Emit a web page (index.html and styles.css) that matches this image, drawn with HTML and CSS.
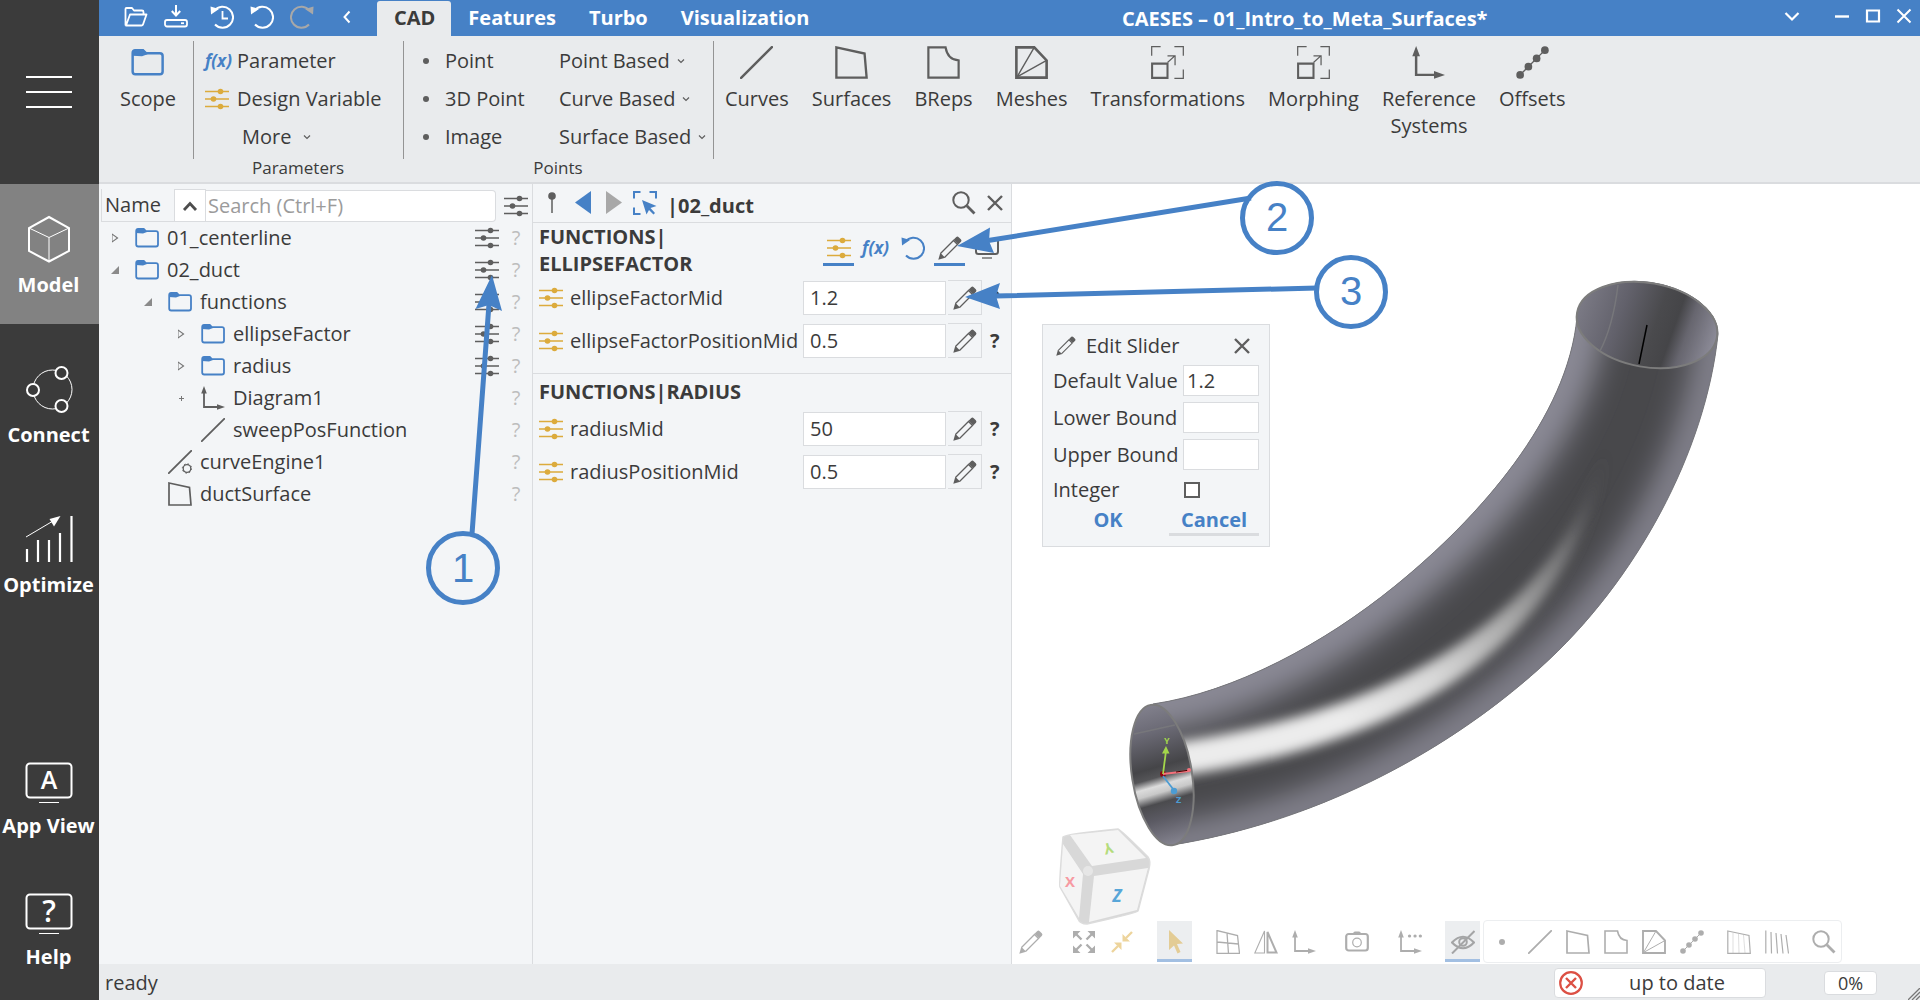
FILE: index.html
```html
<!DOCTYPE html>
<html lang="en">
<head>
<meta charset="utf-8">
<title>CAESES – 01_Intro_to_Meta_Surfaces*</title>
<link rel="stylesheet" href="styles.css">
</head>
<body>
<svg class="sprite" aria-hidden="true">
  <defs>
    <symbol id="folder" viewBox="0 0 24 24"><path d="M1.200 6.500V5q0-2 2-2h5.500l2.200 2.200H21q2 0 2 2V18.500q0 2-2 2H3.200q-2 0-2-2Z" fill="none" stroke="currentColor" stroke-width="1.800"/><path d="M1 7V5Q1 2.500 3.200 2.500H9L12 6 8 7.500Z" fill="currentColor"/></symbol>
    <symbol id="sliders" viewBox="0 0 24 24"><path d="M0 4.500H24M0 12H24M0 19.500H24" stroke="currentColor" stroke-width="1.300"/><g fill="currentColor"><circle cx="15.500" cy="4.500" r="2.800"/><circle cx="8.500" cy="12" r="2.800"/><circle cx="15.500" cy="19.500" r="2.800"/></g></symbol>
    <symbol id="pencil" viewBox="0 0 24 24"><path d="M2.500 17.500 15.500 4.500 19.500 8.500 6.500 21.500" fill="none" stroke="currentColor" stroke-width="1.300"/><path d="M.3 23.700 2.300 16.800 7.200 21.700ZM15.500 3.800 18.300 1Q19.500 0 20.700 1.200L22.800 3.300Q24 4.500 23 5.700L20.200 8.500Z" fill="currentColor"/></symbol>
    <symbol id="line" viewBox="0 0 24 24"><path d="M.8 23.200 23.200.8" stroke="currentColor" stroke-width="1.800" stroke-linecap="round"/></symbol>
    <symbol id="surface" viewBox="0 0 24 24"><path d="M1 1 21.500 5.500 23 23H1Z" fill="none" stroke="currentColor" stroke-width="1.700"/></symbol>
    <symbol id="brep" viewBox="0 0 24 24"><path d="M1 1H13.500Q15 10 23 10.500V23H1Z" fill="none" stroke="currentColor" stroke-width="1.600"/></symbol>
    <symbol id="mesh" viewBox="0 0 24 24"><path d="M1 1H14L23 10.500V23H1Z" fill="none" stroke="currentColor" stroke-width="1.900"/><path d="M1.500 22.500 14 1M1.500 22.500 23 10.500" stroke="currentColor"/></symbol>
    <symbol id="scale" viewBox="0 0 24 24"><path d="M.5 7V.5H7M17 .5h6.500V7M23.500 17v6.500H17M12 12 17.500 7M12 7.200h5.500V14" fill="none" stroke="currentColor" stroke-width=".9"/><path d="M.8 12.800H12V23.200H.8Z" fill="none" stroke="currentColor" stroke-width="1.500"/></symbol>
    <symbol id="axes" viewBox="0 0 24 24"><path d="M3 6V21H17" fill="none" stroke="currentColor" stroke-width="1.800"/><path d="M3 0 5.800 7.500H.2ZM24 21 16 18.200V23.800Z" fill="currentColor"/></symbol>
    <symbol id="axesdots" viewBox="0 0 24 24"><path d="M3 6V21H17" fill="none" stroke="currentColor" stroke-width="1.800"/><path d="M3 0 5.800 7.500H.2ZM24 21 16 18.200V23.800Z" fill="currentColor"/><path d="M11.500 6h.1M17 6h.1M22.300 6h.1" stroke="currentColor" stroke-width="3.200" stroke-linecap="round"/></symbol>
    <symbol id="offsets" viewBox="0 0 24 24"><path d="M3 21 21 3" stroke="currentColor"/><g fill="currentColor"><circle cx="3" cy="21" r="2.800"/><circle cx="9" cy="15" r="2.800"/><circle cx="15" cy="9" r="2.800"/><circle cx="21" cy="3" r="2.800"/></g></symbol>
    <symbol id="engine" viewBox="0 0 24 24"><path d="M.8 23.200 23.200.8" stroke="currentColor" stroke-width="1.800" stroke-linecap="round"/><circle cx="19" cy="18.500" r="3.800" fill="none" stroke="currentColor" stroke-width="1.300"/><circle cx="19" cy="18.500" r="4.700" fill="none" stroke="currentColor" stroke-dasharray="1.500 2.190"/></symbol>
    <symbol id="undo" viewBox="0 0 24 24"><path d="M4.500 5.500A10.500 10.500 0 1 1 5 19.500" fill="none" stroke="currentColor" stroke-width="2"/><path d="M.5 1.500 9 4 1 9.500Z" fill="currentColor"/></symbol>
    <symbol id="search" viewBox="0 0 24 24"><circle cx="9" cy="9" r="7.700" fill="none" stroke="currentColor" stroke-width="2"/><path d="M14.800 14.800 22.500 22.500" stroke="currentColor" stroke-width="2.800"/></symbol>
    <symbol id="close" viewBox="0 0 24 24"><path d="M5 5 19 19M19 5 5 19" stroke="currentColor" stroke-width="2.400"/></symbol>
    <symbol id="dot" viewBox="0 0 24 24"><circle cx="12" cy="12" r="3" fill="currentColor"/></symbol>
    <symbol id="chev" viewBox="0 0 8 8"><path d="M1 2.500 4 5.500 7 2.500" fill="none" stroke="currentColor" stroke-width="1.200"/></symbol>
  </defs>
</svg>

<div class="app">
  <nav class="side" aria-label="Workspaces">
    <button class="burger" aria-label="Menu"><svg width="48" height="34" viewBox="0 0 48 34"><path d="M1 2H47M1 17H47M1 32H47" stroke="currentColor" stroke-width="2"/></svg></button>
    <div class="side-main">
      <button class="side-item active"><svg viewBox="0 0 48 48"><path d="M24 2 44 13V36L24 46.500 4 36V13Z" fill="none" stroke="currentColor" stroke-width="2"/><path d="M4 13 24 22.500 44 13M24 22.500V46" fill="none" stroke="currentColor" stroke-width="1"/></svg>Model</button>
      <button class="side-item"><svg viewBox="0 0 48 48"><circle cx="27.500" cy="24.500" r="19.500" fill="none" stroke="currentColor" stroke-width="1"/><g class="node" stroke="currentColor" stroke-width="2"><circle cx="8" cy="25" r="6"/><circle cx="36.500" cy="8" r="6"/><circle cx="36.500" cy="41" r="6"/></g></svg>Connect</button>
      <button class="side-item"><svg viewBox="0 0 48 48"><path d="M2 34V47M13 25V47M24 25V47M35 18V47M46.500 1V47" stroke="currentColor" stroke-width="2.200"/><path d="M1 22 28 6" stroke="currentColor"/><path d="M35.500 1 29 11.500 24.500 4Z" fill="currentColor"/></svg>Optimize</button>
    </div>
    <div class="side-foot">
      <button class="side-item"><svg viewBox="0 0 48 48"><rect x="1.500" y="7.500" width="45" height="34" rx="3.500" fill="none" stroke="currentColor" stroke-width="2"/><path d="M14 46.500H34" stroke="currentColor"/><text x="24" y="33" text-anchor="middle">A</text></svg>App View</button>
      <button class="side-item"><svg viewBox="0 0 48 48"><rect x="1.500" y="7.500" width="45" height="34" rx="3.500" fill="none" stroke="currentColor" stroke-width="2"/><path d="M14 46.500H34" stroke="currentColor"/><text class="big" x="24" y="35" text-anchor="middle">?</text></svg>Help</button>
    </div>
  </nav>

  <div class="main">
    <header class="titlebar">
      <div class="quick">
        <button aria-label="Open"><svg class="ic" viewBox="0 0 24 24"><path d="M1.500 20.500V4Q1.500 3 2.500 3H8l2 2.500h8Q19.500 5.500 19.500 7V9M2 20.500 6 9.500H22.500L19 19.500Q18.500 20.500 17.500 20.500Z" fill="none" stroke="currentColor" stroke-width="1.800" stroke-linejoin="round"/></svg></button>
        <button aria-label="Save"><svg class="ic" viewBox="0 0 24 24"><path d="M12 0V9M7.800 6 12 10.500 16.200 6" fill="none" stroke="currentColor" stroke-width="2"/><rect x="1" y="15" width="22" height="6.500" rx="2" fill="none" stroke="currentColor" stroke-width="1.800"/><path d="M17 18.200h3" stroke="currentColor" stroke-width="1.800"/></svg></button>
        <button aria-label="History" class="q-gap"><svg class="ic" viewBox="0 0 24 24"><use href="#undo"/><path d="M12.500 6V13.500H18" fill="none" stroke="currentColor" stroke-width="1.800"/></svg></button>
        <button aria-label="Undo"><svg class="ic"><use href="#undo"/></svg></button>
        <button aria-label="Redo" class="off"><svg class="ic" viewBox="0 0 24 24"><path d="M19.500 5.500A10.500 10.500 0 1 0 19 19.500" fill="none" stroke="currentColor" stroke-width="2"/><path d="M23.500 1.500 15 4 23 9.500Z" fill="currentColor"/></svg></button>
        <button aria-label="Collapse" class="fold"><svg class="ic" viewBox="0 0 24 24"><path d="M14.500 6.500 9.500 12 14.500 17.500" fill="none" stroke="currentColor" stroke-width="2"/></svg></button>
      </div>
      <div class="tabs" role="tablist">
        <button role="tab" aria-selected="true" class="tab on">CAD</button><button role="tab" class="tab">Features</button><button role="tab" class="tab">Turbo</button><button role="tab" class="tab">Visualization</button>
      </div>
      <h1>CAESES – 01_Intro_to_Meta_Surfaces*</h1>
      <div class="win">
        <button aria-label="Options" class="w-opt"><svg viewBox="0 0 16 16"><path d="M1.500 5 8 11.500 14.500 5" fill="none" stroke="currentColor" stroke-width="2.200"/></svg></button>
        <button aria-label="Minimize"><svg viewBox="0 0 16 16"><path d="M1 8.500H15" stroke="currentColor" stroke-width="2.400"/></svg></button>
        <button aria-label="Maximize"><svg viewBox="0 0 16 16"><path d="M2 2.500H14V13.500H2Z" fill="none" stroke="currentColor" stroke-width="2.200"/></svg></button>
        <button aria-label="Close"><svg viewBox="0 0 16 16"><path d="M1.500 1.500 14.500 14.500M14.500 1.500 1.500 14.500" stroke="currentColor" stroke-width="2"/></svg></button>
      </div>
    </header>

    <div class="ribbon">
      <div class="group scope"><button class="tool"><svg class="blue"><use href="#folder"/></svg>Scope</button></div>
      <div class="group params">
        <button class="cmd"><span class="fx">f(x)</span>Parameter</button>
        <button class="cmd"><svg class="ic gold"><use href="#sliders"/></svg>Design Variable</button>
        <button class="cmd more">More<svg class="chev"><use href="#chev"/></svg></button>
        <div class="caption">Parameters</div>
      </div>
      <div class="group points">
        <button class="cmd"><svg class="ic"><use href="#dot"/></svg>Point</button><button class="cmd drop">Point Based<svg class="chev"><use href="#chev"/></svg></button>
        <button class="cmd"><svg class="ic"><use href="#dot"/></svg>3D Point</button><button class="cmd drop">Curve Based<svg class="chev"><use href="#chev"/></svg></button>
        <button class="cmd"><svg class="ic"><use href="#dot"/></svg>Image</button><button class="cmd drop">Surface Based<svg class="chev"><use href="#chev"/></svg></button>
        <div class="caption">Points</div>
      </div>
      <div class="group tools">
        <button class="tool"><svg><use href="#line"/></svg>Curves</button>
        <button class="tool"><svg><use href="#surface"/></svg>Surfaces</button>
        <button class="tool"><svg><use href="#brep"/></svg>BReps</button>
        <button class="tool"><svg><use href="#mesh"/></svg>Meshes</button>
        <button class="tool"><svg><use href="#scale"/></svg>Transformations</button>
        <button class="tool"><svg><use href="#scale"/></svg>Morphing</button>
        <button class="tool"><svg><use href="#axes"/></svg>Reference<br>Systems</button>
        <button class="tool"><svg><use href="#offsets"/></svg>Offsets</button>
      </div>
    </div>

    <div class="work">
      <section class="tree" aria-label="Objects">
        <div class="tree-head">
          <label class="name" for="find">Name</label>
          <button class="up" aria-label="Collapse all"><svg width="16" height="16" viewBox="0 0 16 16"><path d="M2 12 8 5.500 14 12" fill="none" stroke="currentColor" stroke-width="2.800"/></svg></button>
          <input id="find" type="text" placeholder="Search (Ctrl+F)">
          <button class="filter" aria-label="Filter"><svg class="ic"><use href="#sliders"/></svg></button>
        </div>
        <ul>
          <li class="l0"><i class="tw shut"></i><svg class="ic blue"><use href="#folder"/></svg><span>01_centerline</span><svg class="ic"><use href="#sliders"/></svg><b>?</b></li>
          <li class="l0"><i class="tw open"></i><svg class="ic blue"><use href="#folder"/></svg><span>02_duct</span><svg class="ic"><use href="#sliders"/></svg><b>?</b></li>
          <li class="l1"><i class="tw open"></i><svg class="ic blue"><use href="#folder"/></svg><span>functions</span><svg class="ic"><use href="#sliders"/></svg><b>?</b></li>
          <li class="l2"><i class="tw shut"></i><svg class="ic blue"><use href="#folder"/></svg><span>ellipseFactor</span><svg class="ic"><use href="#sliders"/></svg><b>?</b></li>
          <li class="l2"><i class="tw shut"></i><svg class="ic blue"><use href="#folder"/></svg><span>radius</span><svg class="ic"><use href="#sliders"/></svg><b>?</b></li>
          <li class="l2"><i class="tw leaf"></i><svg class="ic"><use href="#axes"/></svg><span>Diagram1</span><b>?</b></li>
          <li class="l2"><i class="tw"></i><svg class="ic"><use href="#line"/></svg><span>sweepPosFunction</span><b>?</b></li>
          <li class="l1"><i class="tw"></i><svg class="ic"><use href="#engine"/></svg><span>curveEngine1</span><b>?</b></li>
          <li class="l1"><i class="tw"></i><svg class="ic"><use href="#surface"/></svg><span>ductSurface</span><b>?</b></li>
        </ul>
      </section>

      <section class="props" aria-label="Object editor">
        <div class="props-head">
          <button aria-label="Pin"><svg class="ic" viewBox="0 0 24 24"><circle cx="12" cy="5" r="3.800" fill="currentColor"/><path d="M12 6V22" stroke="currentColor" stroke-width="1.500"/></svg></button>
          <button aria-label="Back" class="blue"><svg class="ic" viewBox="0 0 24 24"><path d="M20 0V23L4 11.500Z" fill="currentColor"/></svg></button>
          <button aria-label="Forward" class="dim"><svg class="ic" viewBox="0 0 24 24"><path d="M4 0V23L20 11.500Z" fill="currentColor"/></svg></button>
          <button aria-label="Select" class="blue"><svg class="ic" viewBox="0 0 24 24"><path d="M1 7.500V1H7.500M16.500 1H23V7.500M1 16.500V23H7.500" fill="none" stroke="currentColor" stroke-width="2"/><path d="M9 9 23.500 15 17.500 17 22 22 20.500 23.500 16 19 13.500 23.500Z" fill="currentColor"/></svg></button>
          <h2>|02_duct</h2>
          <button aria-label="Search"><svg class="ic"><use href="#search"/></svg></button>
          <button aria-label="Close"><svg class="ic"><use href="#close"/></svg></button>
        </div>
        <div class="sect">
          <div class="sect-head">
            <h3>FUNCTIONS|<br>ELLIPSEFACTOR</h3>
            <div class="acts">
              <button class="on gold" aria-label="Design variables"><svg class="ic"><use href="#sliders"/></svg></button>
              <button aria-label="Expression"><span class="fx">f(x)</span></button>
              <button class="blue" aria-label="Reset"><svg class="ic"><use href="#undo"/></svg></button>
              <button class="on" aria-label="Edit"><svg class="ic"><use href="#pencil"/></svg></button>
              <button aria-label="Display"><svg class="ic" viewBox="0 0 24 24"><rect x="1" y="3" width="22" height="15" rx="2.500" fill="none" stroke="currentColor" stroke-width="2"/><path d="M7 22H17" stroke="currentColor" stroke-width="1.300"/></svg></button>
            </div>
          </div>
          <div class="field"><svg class="ic gold"><use href="#sliders"/></svg><label for="f1">ellipseFactorMid</label><input id="f1" type="text" value="1.2"><button class="edit" aria-label="Edit"><svg class="ic"><use href="#pencil"/></svg></button><b>?</b></div>
          <div class="field"><svg class="ic gold"><use href="#sliders"/></svg><label for="f2">ellipseFactorPositionMid</label><input id="f2" type="text" value="0.5"><button class="edit" aria-label="Edit"><svg class="ic"><use href="#pencil"/></svg></button><b>?</b></div>
        </div>
        <div class="sect">
          <h3>FUNCTIONS|RADIUS</h3>
          <div class="field"><svg class="ic gold"><use href="#sliders"/></svg><label for="f3">radiusMid</label><input id="f3" type="text" value="50"><button class="edit" aria-label="Edit"><svg class="ic"><use href="#pencil"/></svg></button><b>?</b></div>
          <div class="field"><svg class="ic gold"><use href="#sliders"/></svg><label for="f4">radiusPositionMid</label><input id="f4" type="text" value="0.5"><button class="edit" aria-label="Edit"><svg class="ic"><use href="#pencil"/></svg></button><b>?</b></div>
        </div>
      </section>

      <section class="view" aria-label="3D view">
        <svg class="scene" width="908" height="780" viewBox="1012 183 908 780">
          <defs>
            <clipPath id="body"><path id="duct" d="M1153 703C1235 691 1325 642 1395 585C1480 516 1568 416 1577 316A71 43 10 0 1 1718 333C1706 450 1636 581 1540 667C1441 756 1310 822 1172 844Z"/></clipPath>
            <clipPath id="mouth"><ellipse cx="1162" cy="774" rx="30" ry="71" transform="rotate(-9 1162 774)"/></clipPath>
            <filter id="soft" filterUnits="userSpaceOnUse" x="1000" y="180" width="920" height="800"><feGaussianBlur stdDeviation="15"/></filter>
            <filter id="glow" filterUnits="userSpaceOnUse" x="1000" y="180" width="920" height="800"><feGaussianBlur stdDeviation="6"/></filter>
            <linearGradient id="shine" gradientUnits="userSpaceOnUse" x1="1340" y1="720" x2="1610" y2="450"><stop offset="0" stop-color="#ececec"/><stop offset=".25" stop-color="#d8d8d8"/><stop offset=".5" stop-color="#a8a8a8"/><stop offset=".75" stop-color="#707072"/><stop offset="1" stop-color="#4a4a4d" stop-opacity="0"/></linearGradient>
            <linearGradient id="inA" gradientUnits="userSpaceOnUse" x1="1148" y1="704" x2="1180" y2="842"><stop offset="0" stop-color="#82818d"/><stop offset=".2" stop-color="#6a6974"/><stop offset=".44" stop-color="#454548"/><stop offset=".51" stop-color="#555558"/><stop offset=".57" stop-color="#dcdcdc"/><stop offset=".62" stop-color="#c8c8c8"/><stop offset=".69" stop-color="#4b4b4e"/><stop offset=".8" stop-color="#5b5a63"/><stop offset="1" stop-color="#858490"/></linearGradient>
            <linearGradient id="inB" gradientUnits="userSpaceOnUse" x1="1577" y1="312" x2="1718" y2="336"><stop offset="0" stop-color="#7b7a85"/><stop offset=".3" stop-color="#62616b"/><stop offset=".55" stop-color="#4a4a4d"/><stop offset=".68" stop-color="#454548"/><stop offset=".78" stop-color="#67666f"/><stop offset="1" stop-color="#8f8e9b"/></linearGradient>
          </defs>
          <g clip-path="url(#body)">
            <rect x="1120" y="270" width="610" height="590" fill="#48484b"/>
            <g fill="none" filter="url(#soft)">
              <path stroke="#8b8a96" stroke-width="58" d="M1110 709L1153 703C1235 691 1325 642 1395 585C1480 516 1568 416 1577 316L1580 260"/>
              <path stroke="#84838f" stroke-width="42" d="M1722 270L1718 333C1706 450 1636 581 1540 667C1441 756 1310 822 1172 844L1110 852"/>
            </g>
            <path d="M1140 746C1345 722 1553 648 1610 430C1575 676 1355 756 1140 780Z" fill="url(#shine)" filter="url(#glow)"/>
          </g>
          <use href="#duct" fill="none" stroke="#77777c" stroke-width="1"/>
          <ellipse cx="1647" cy="324" rx="71" ry="42" transform="rotate(10 1647 324)" fill="url(#inB)" stroke="#7c7c7c" stroke-width="2"/>
          <path d="M1618 284Q1613 325 1600 350" fill="none" stroke="#77777b" stroke-width="1.500"/>
          <path d="M1647 324 1639 363" stroke="#000" stroke-width="1.500"/>
          <g clip-path="url(#mouth)"><rect x="1110" y="680" width="110" height="190" fill="url(#inA)" transform="rotate(-3 1162 774)"/></g>
          <ellipse cx="1162" cy="774" rx="30" ry="71" transform="rotate(-9 1162 774)" fill="none" stroke="#7c7c7c" stroke-width="2"/>
          <path d="M1134 733 1175 724" stroke="#77777b" stroke-width="1.500"/>
          <circle cx="1163" cy="773" r="3" fill="#8b0a10"/>
          <path d="M1163 773 1189 770" stroke="#f5717b" stroke-width="1.800"/><path d="M1176 771 1190 769" stroke="#400" stroke-width="1"/><circle cx="1189" cy="769" r="2" fill="#f5717b"/>
          <path d="M1163 773 1166 750" stroke="#a3d64b" stroke-width="1.800"/><path d="M1166 745 1169.500 752.500H1162Z" fill="#a3d64b"/>
          <path d="M1163 775 1173 788" stroke="#4c9cd3" stroke-width="1.800"/><circle cx="1174" cy="790" r="3.200" fill="#4c9cd3"/>
          <text class="ax" x="1164" y="743" fill="#a3d64b">Y</text><text class="ax" x="1176" y="802" fill="#4c9cd3">Z</text>
          <g stroke="#dcdcdc" stroke-linejoin="round">
            <path d="M1063 836Q1066 833 1118 828Q1121 829 1148 856Q1151 860 1149 868L1138 910Q1137 912 1087 923Q1080 923 1078 918L1060 886Q1059 883 1063 836Z" fill="#d8d8d8" stroke-width="1.500"/>
            <g fill="#f4f4f4" stroke="none"><path d="M1070 834 1118 829 1146 857 1092 865Z"/><path d="M1063 843 1083 873 1079 917 1060 885Z"/><path d="M1094 875 1148 867 1137 909 1089 921Z"/><circle cx="1088" cy="870" r="5" fill="#e6e6e6"/></g>
          </g>
          <text class="cube" x="1108" y="846" text-anchor="middle" fill="#b5dc7c" transform="rotate(165 1108 846)" dy="4">Y</text>
          <text class="cube" x="1070" y="886" text-anchor="middle" fill="#f79aa2">X</text>
          <text class="cube z" x="1117" y="901" text-anchor="middle" fill="#58a6d8">Z</text>
        </svg>

        <form class="dialog" aria-label="Edit Slider">
          <div class="dlg-head"><svg class="ic20"><use href="#pencil"/></svg><h2>Edit Slider</h2><button type="button" aria-label="Close"><svg class="ic"><use href="#close"/></svg></button></div>
          <div class="dlg-row"><label for="d1">Default Value</label><input id="d1" type="text" value="1.2"></div>
          <div class="dlg-row"><label for="d2">Lower Bound</label><input id="d2" type="text"></div>
          <div class="dlg-row"><label for="d3">Upper Bound</label><input id="d3" type="text"></div>
          <div class="dlg-row check"><label for="d4">Integer</label><input id="d4" type="checkbox"></div>
          <div class="dlg-btns"><button type="button">OK</button><button type="button" class="cancel">Cancel</button></div>
        </form>

        <div class="bar" role="toolbar">
          <div class="set"><button aria-label="Edit"><svg class="ic"><use href="#pencil"/></svg></button></div>
          <div class="set">
            <button aria-label="Fit all"><svg class="ic" viewBox="0 0 24 24"><path d="M3 3 9.500 9.500M21 3 14.500 9.500M3 21 9.500 14.500M21 21 14.500 14.500" stroke="currentColor" stroke-width="2.400"/><path d="M1 1H8.500L1 8.500ZM23 1V8.500L15.500 1ZM1 23V15.500L8.500 23ZM23 23H15.500L23 15.500Z" fill="currentColor"/></svg></button>
            <button class="gold" aria-label="Fit selection"><svg class="ic" viewBox="0 0 24 24"><path d="M2 22 8 16M22 2 16 8" stroke="currentColor" stroke-width="2.400"/><path d="M11.500 12.500V20L4 12.500ZM12.500 11.500V4L20 11.500Z" fill="currentColor"/></svg></button>
          </div>
          <div class="set"><button class="on gold" aria-label="Pick"><svg class="ic" viewBox="0 0 24 24"><path d="M6 0 20 13.500 14 14 17.500 22 14.500 23.500 11 15.500 6 20Z" fill="currentColor"/></svg></button></div>
          <div class="set">
            <button aria-label="Grid"><svg class="ic" viewBox="0 0 24 24"><path d="M1 .5 21.500 5.500 23.500 23.500H1ZM1 12 22.500 14M11 3 12.500 23.500" fill="none" stroke="currentColor" stroke-width="1.300"/></svg></button>
            <button aria-label="Mirror"><svg class="ic" viewBox="0 0 24 24"><path d="M10.500 1V23H.8Z" fill="none" stroke="currentColor" stroke-width="1.100"/><path d="M13.500 2V22.500H22.500Z" fill="none" stroke="currentColor" stroke-width="2"/></svg></button>
            <button aria-label="Axes"><svg class="ic"><use href="#axes"/></svg></button>
          </div>
          <div class="set"><button aria-label="Screenshot"><svg class="ic" viewBox="0 0 24 24"><rect x="1.200" y="4" width="21.600" height="16.500" rx="2.500" fill="none" stroke="currentColor" stroke-width="2.200"/><path d="M8 3.500Q8.500 1.500 10 1.500h4q1.500 0 2 2Z" fill="currentColor"/><circle cx="12" cy="12.500" r="4.300" fill="none" stroke="currentColor" stroke-width="1.200"/></svg></button></div>
          <div class="set"><button aria-label="Scene axes"><svg class="ic"><use href="#axesdots"/></svg></button></div>
          <div class="set">
            <button class="on" aria-label="Hide"><svg class="ic" viewBox="0 0 24 24"><path d="M1 12.500Q12 1 23 12.500Q12 24 1 12.500Z" fill="none" stroke="currentColor" stroke-width="2.200"/><circle cx="12" cy="12" r="3.800" fill="none" stroke="currentColor" stroke-width="2"/><path d="M1 23.500 23.500 1" stroke="currentColor" stroke-width="2"/></svg></button>
            <div class="box">
              <button aria-label="Points"><svg class="ic"><use href="#dot"/></svg></button>
              <button aria-label="Curves"><svg class="ic"><use href="#line"/></svg></button>
              <button aria-label="Surfaces"><svg class="ic"><use href="#surface"/></svg></button>
              <button aria-label="BReps"><svg class="ic"><use href="#brep"/></svg></button>
              <button aria-label="Meshes"><svg class="ic"><use href="#mesh"/></svg></button>
              <button aria-label="Offsets"><svg class="ic"><use href="#offsets"/></svg></button>
              <button class="sp" aria-label="Shading"><svg class="ic" viewBox="0 0 24 24"><path d="M.8 1 22 5.500 23.300 23.300H.8Z" fill="none" stroke="currentColor" stroke-width="1.200"/><path d="M6 3V23M11.500 4 12 23M16.500 5 18 23" stroke="currentColor" stroke-width=".4"/></svg></button>
              <button aria-label="Lines"><svg class="ic" viewBox="0 0 24 24"><path d="M.8.500V23.500M6 2 6.500 23.500M11 3 12.500 23.500M16 4 18 23.500M21 5 23.500 23.500" stroke="currentColor" stroke-width="1.200"/></svg></button>
              <button class="sp" aria-label="Zoom"><svg class="ic"><use href="#search"/></svg></button>
            </div>
          </div>
        </div>
      </section>
    </div>

    <footer class="status">
      <span class="ready">ready</span>
      <div class="state"><svg class="ic" viewBox="0 0 24 24"><circle cx="12" cy="12" r="10.800" fill="none" stroke="currentColor" stroke-width="2.200"/><path d="M7 7 17 17M17 7 7 17" stroke="currentColor" stroke-width="2.400"/></svg><span>up to date</span></div>
      <div class="pct">0%</div>
      <svg class="grip" width="12" height="12" viewBox="0 0 12 12"><path d="M0 12 12 0M4 12 12 4M8 12 12 8" stroke="#777" stroke-width="1.300"/></svg>
    </footer>
  </div>

  <svg class="notes" width="1400" height="620" viewBox="0 0 1400 620">
    <g stroke="#4681c6" stroke-width="5" fill="none">
      <path d="M472 534 489 304M1251 198 985 241M1317 288 995 296"/>
      <circle cx="463" cy="568" r="34.500"/><circle cx="1277" cy="218" r="34.500"/><circle cx="1351" cy="292" r="34.500"/>
    </g>
    <path d="M492 275 502 311 489 305 475.500 309ZM957 246 990 227.500 989 241 994 253ZM965 297 1000 283 996 296 1000 309Z" fill="#4681c6"/>
    <g fill="#4681c6" text-anchor="middle"><text x="463" y="582">1</text><text x="1277" y="231">2</text><text x="1351" y="305">3</text></g>
  </svg>
</div>
</body>
</html>
```
FILE: styles.css
```css
* { box-sizing: border-box; }
body { margin: 0; font: 20px/28px "Open Sans", "Noto Sans", sans-serif; color: #3b3b3b; background: #e9ebed; }
button, input { font: inherit; color: inherit; border: 0; padding: 0; margin: 0; background: none; }
button { display: flex; align-items: center; justify-content: center; }
svg { display: block; flex: none; color: inherit; }
h1, h2, h3 { margin: 0; font-size: 20px; font-weight: 700; }
.sprite { position: absolute; width: 0; height: 0; }
.ic { width: 24px; height: 24px; color: #5e5e5e; }
.ic20 { width: 20px; height: 20px; color: #5e5e5e; }
.blue, .blue .ic { color: #4681c6; }
.gold, .gold .ic { color: #dcab3c; }
.dim .ic { color: #a8a8a8; }
.fx { color: #4681c6; font-size: 17px; font-weight: 700; font-style: italic; }

.app { position: relative; display: grid; grid-template-columns: 99px 1fr; min-height: 100vh; }

/* left workspace switcher */
.side { display: flex; flex-direction: column; background: #3b3b3b; color: #fff; }
.burger { height: 184px; padding-right: 2px; color: #fff; }
.side-main { display: flex; flex-direction: column; gap: 10px; }
.side-foot { margin-top: auto; padding-bottom: 4px; }
.side-item { display: flex; flex-direction: column; justify-content: flex-start; gap: 8px; width: 99px; height: 140px; padding: 31px 2px 0 0; font-weight: 700; white-space: nowrap; }
.side-item svg { width: 48px; height: 48px; }
.side-item text { fill: #fff; font-size: 25px; font-weight: 600; }
.side-item text.big { font-size: 30px; }
.side-foot .side-item { height: 131px; padding-top: 22px; }
.side-item.active { background: #828282; }
.node { fill: #3b3b3b; }

.main { display: flex; flex-direction: column; min-width: 0; }

/* title bar */
.titlebar { display: flex; align-items: stretch; height: 36px; background: #4681c6; color: #fff; }
.titlebar .ic { color: #fff; }
.quick { display: flex; align-items: center; gap: 16px; padding: 0 15px 2px 25px; width: 278px; }
.q-gap { margin-left: 6px; }
.quick .fold { margin-left: 5px; }
.quick .off .ic { color: #a8a8a8; }
.tabs { display: flex; }
.tab { padding: 0 16px 0 17px; font-weight: 700; }
.tab.on { margin-top: 1px; padding-bottom: 1px; background: #e9ebed; color: #3b3b3b; border-radius: 3px 3px 0 0; }
.titlebar h1 { flex: 1; text-align: center; line-height: 37px; }
.win { display: flex; align-items: center; gap: 15px; padding: 0 8px 4px 0; }
.win svg { width: 16px; height: 16px; }
.w-opt { margin-right: 19px; }

/* ribbon */
.ribbon { display: flex; height: 148px; padding-top: 5px; border-bottom: 2px solid #dadcdf; }
.group { position: relative; }
.group + .group::before { content: ""; position: absolute; left: 0; top: 0; width: 1px; height: 118px; background: #949494; }
.tool { flex-direction: column; justify-content: flex-start; gap: 6px; padding-top: 5px; line-height: 27px; }
.tool svg { width: 33px; height: 33px; color: #5e5e5e; }
.tool .blue { color: #4681c6; }
.scope { display: flex; justify-content: center; width: 94px; padding-left: 4px; }
.params { width: 210px; padding-top: 1px; }
.cmd { justify-content: flex-start; gap: 8px; height: 38px; white-space: nowrap; }
.params .cmd { padding-left: 12px; }
.params .fx { width: 24px; white-space: nowrap; }
.params .more { padding-left: 49px; gap: 12px; }
.chev { width: 8px; height: 8px; color: #5e5e5e; }
.caption { height: 24px; font-size: 17px; line-height: 24px; text-align: center; }
.points { display: grid; grid-template-columns: 145px 1fr; grid-template-rows: 38px 38px 38px 24px; width: 310px; padding: 1px 0 0 11px; }
.points .cmd { gap: 7px; }
.points .caption { grid-column: 1 / 3; padding-right: 11px; }
.tools { display: flex; align-items: flex-start; gap: 23px; padding-left: 12px; }

.work { flex: 1; display: grid; grid-template-columns: 433px 479px 1fr; background: #f3f5f7; }

/* object tree */
.tree-head { display: flex; align-items: center; height: 38px; padding: 5px 4px 0 2px; }
.tree-head .name { width: 73px; height: 33px; padding-left: 3px; border-bottom: 1px solid #dadcdf; border-left: 1px solid #dadcdf; line-height: 32px; }
.tree-head .up { width: 32px; height: 33px; background: #fff; border: 1px solid #dadcdf; color: #4d4d4d; }
.tree-head input { flex: 1; min-width: 0; height: 32px; padding: 0 2px; background: #fff; border: 1px solid #dadcdf; border-left: 0; border-radius: 0 4px 4px 0; }
input::placeholder { color: #9b9b9b; opacity: 1; }
.filter { margin-left: 8px; }
.tree ul { list-style: none; margin: 0; padding: 0; }
.tree li { display: flex; align-items: center; height: 32px; padding: 0 10px 0 8px; }
.tree .l1 { padding-left: 41px; }
.tree .l2 { padding-left: 74px; }
.tree li span { flex: 1; padding-left: 8px; }
.tree li b { width: 12px; margin-left: 11px; color: #bdbdbd; font-weight: 400; text-align: center; }
.tw { display: flex; align-items: center; justify-content: center; width: 16px; height: 16px; margin-right: 12px; }
.tw.shut::before { content: ""; width: 7px; height: 10px; background: #777; clip-path: polygon(0 0, 100% 50%, 0 100%, 0 0, 1px 2px, 1px 8px, 5px 5px, 1px 2px); }
.tw.open::before { content: ""; width: 8px; height: 8px; background: #8a8a8a; clip-path: polygon(100% 0, 100% 100%, 0 100%); }
.tw.leaf::before { content: ""; width: 5px; height: 5px; background: linear-gradient(#777, #777) 0 2px / 5px 1px no-repeat, linear-gradient(#777, #777) 2px 0 / 1px 5px no-repeat; }

/* object editor */
.props { border-left: 1px solid #dadcdf; }
.props-head { display: flex; align-items: center; gap: 7px; height: 39px; padding: 0 4px 0 7px; border-bottom: 1px solid #dadcdf; }
.props-head button { height: 34px; }
.props-head h2 { flex: 1; padding: 5px 0 0 3px; }
.sect { padding: 0 9px 7px 6px; border-bottom: 1px solid #dadcdf; }
.sect:last-child { border: 0; }
.sect h3 { line-height: 27px; }
.sect > h3 { padding-top: 4px; margin-bottom: 6px; }
.sect-head { display: flex; justify-content: space-between; height: 57px; }
.sect-head h3 { flex: none; }
.acts { display: flex; gap: 6px; }
.acts button { width: 31px; height: 43px; padding-top: 9px; border-bottom: 3px solid transparent; }
.acts .on { border-bottom-color: #4681c6; }
.field { display: grid; grid-template-columns: 31px 233px 143px 34px 1fr; align-items: center; height: 34px; margin-bottom: 9px; }
.field input { height: 34px; padding: 0 6px; background: #fff; border: 1px solid #dadcdf; }
.field .edit { width: 34px; height: 35px; margin-left: 2px; border: 1px solid #dadcdf; border-left: 0; }
.field b { padding-left: 10px; }

/* 3D view */
.view { position: relative; display: flex; flex-direction: column; justify-content: flex-end; min-width: 0; background: #fff; border-left: 1px solid #dadcdf; }
.scene { position: absolute; left: 0; top: 0; }
.ax { font-size: 9px; font-weight: 700; }
.cube { font-size: 15px; font-weight: 700; }
.cube.z { font-size: 17px; font-style: italic; }
.dialog { position: absolute; left: 30px; top: 140px; width: 228px; padding: 7px 10px 10px 10px; background: #f3f5f7; border: 1px solid #dadcdf; }
.dlg-head { display: flex; align-items: center; height: 28px; padding: 0 5px 0 3px; margin-bottom: 5px; }
.dlg-head h2 { flex: 1; padding-left: 10px; font-weight: 400; }
.dlg-row { display: flex; align-items: center; justify-content: space-between; height: 31px; margin-bottom: 6px; white-space: nowrap; }
.dlg-row input[type="text"] { width: 76px; height: 31px; padding: 0 3px; background: #fff; border: 1px solid #dadcdf; }
.dlg-row.check { height: 28px; margin-bottom: 0; }
.dlg-row input[type="checkbox"] { appearance: none; width: 16px; height: 16px; margin-right: 59px; background: #fff; border: 2px solid #5e5e5e; }
.dlg-btns { display: flex; justify-content: flex-end; gap: 16px; }
.dlg-btns button { width: 90px; height: 32px; padding-top: 3px; color: #4681c6; font-weight: 700; border-bottom: 3px solid transparent; }
.dlg-btns .cancel { border-bottom-color: #dadcdf; }
.bar { position: relative; display: flex; align-items: center; gap: 18px; padding: 0 0 1px 1px; }
.bar svg { opacity: .5; }
.set { display: flex; align-items: center; gap: 3px; }
.bar button { width: 35px; height: 41px; border-bottom: 3px solid transparent; padding-top: 3px; }
.bar .on { background: #eceef0; border-bottom-color: #a2bfe2; }
.bar .box { display: flex; gap: 3px; border: 1px solid #eceef0; border-radius: 4px; }
.bar .sp { margin-left: 9px; }

/* status bar */
.status { position: relative; display: flex; align-items: center; height: 36px; padding: 2px 43px 0 6px; }
.ready { flex: 1; }
.state { display: flex; align-items: center; width: 212px; height: 30px; padding-left: 4px; background: #fff; border: 1px solid #dadcdf; border-radius: 4px; }
.state .ic { color: #dc5044; }
.state span { flex: 1; padding-left: 6px; text-align: center; }
.pct { width: 53px; height: 24px; margin-left: 58px; background: #fff; border: 1px solid #dadcdf; border-radius: 4px; font-size: 18px; line-height: 22px; text-align: center; }
.grip { position: absolute; right: 0; bottom: 0; }

/* numbered callouts drawn over the window */
.notes { position: absolute; left: 0; top: 0; pointer-events: none; }
.notes text { font: 40px "Liberation Sans", sans-serif; }
```
